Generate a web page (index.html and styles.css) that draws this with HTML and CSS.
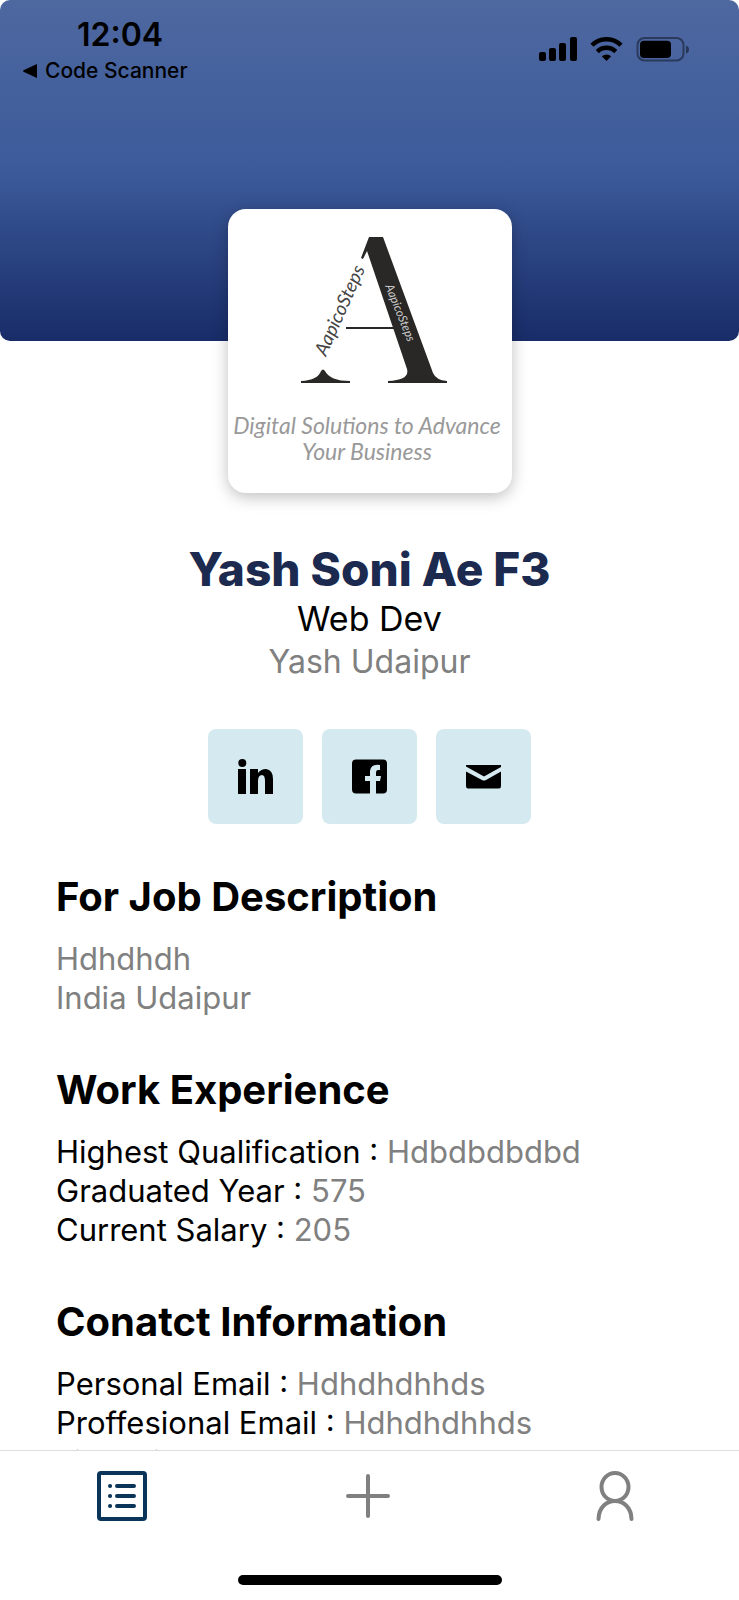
FILE: index.html
```html
<!DOCTYPE html>
<html lang="en">
<head>
<meta charset="utf-8">
<meta name="viewport" content="width=device-width, initial-scale=1">
<title>Yash Soni Ae F3</title>
<link rel="stylesheet" href="styles.css">
</head>
<body>
<div class="app">
  <main class="content">
    <header class="cover">
      <div class="status-left">
        <span class="time">12:04</span>
        <a class="back" href="#"><svg class="back-icon" viewBox="0 0 14 14" aria-hidden="true"><path d="M14 0v14L1 8Q-.8 7 1 6Z"/></svg>Code Scanner</a>
      </div>
      <svg class="status-icons" viewBox="0 0 150 26" aria-hidden="true">
        <rect x="0" y="15" width="7" height="9" rx="2"/>
        <rect x="10" y="11" width="7" height="13" rx="2"/>
        <rect x="20" y="6" width="7" height="18" rx="2"/>
        <rect x="31" y="0" width="7" height="24" rx="2"/>
        <g fill="none" stroke="#000" stroke-width="4.4">
          <path d="M53 8.200a20.500 20.500 0 0 1 29 0"/>
          <path d="M58.300 14.600a13 13 0 0 1 18.400 0"/>
        </g>
        <path d="M67.500 24 62.800 19.200a7 7 0 0 1 9.400 0Z"/>
        <rect x="98.500" y="1" width="46" height="22.500" rx="7" fill="none" stroke="#000" stroke-opacity=".42" stroke-width="2"/>
        <rect x="101" y="3.700" width="31" height="17.200" rx="4"/>
        <path d="M147 8.500q3 1 3 4t-3 4Z" fill-opacity=".45"/>
      </svg>
    </header>

    <section class="profile">
      <svg class="logo" viewBox="0 0 284 284" role="img" aria-label="AapicoSteps">
        <g fill="#292826">
          <path d="M141 28h14l50 136q3 7 14 8v2h-59v-2q22-1 19-12L139 42l-4 8-2-1Z"/>
          <path d="M118 118h49v2h-49Z"/>
          <path d="M73 172q17-1 20-10 2-3 4 0 5 10 25 10v2H73Z"/>
        </g>
        <text class="script" transform="translate(98 148) rotate(-66)" font-size="19" fill="#444">AapicoSteps</text>
        <text class="script" transform="translate(157 77) rotate(68)" font-size="12" fill="#ccc">AapicoSteps</text>
        <text class="script" x="139" y="225" font-size="23" text-anchor="middle" fill="#999">Digital Solutions to Advance</text>
        <text class="script" x="139" y="251" font-size="23" text-anchor="middle" fill="#999">Your Business</text>
      </svg>
      <h1 class="name">Yash Soni Ae F3</h1>
      <p class="role">Web Dev</p>
      <p class="company">Yash Udaipur</p>
      <nav class="social" aria-label="Social links">
        <a class="social-link" href="#" aria-label="LinkedIn"><svg viewBox="0 0 36 36"><circle cx="4.300" cy="4" r="4"/><path d="M0 10h8v25H0ZM12 10h8v4q3-4 8-4 7 1 7 10v15h-8V22q0-6-3-6-4 0-4 6v13h-8Z"/></svg></a>
        <a class="social-link" href="#" aria-label="Facebook"><svg viewBox="0 0 36 36"><path d="M4 .5h27q4 0 4 4v26q0 4-4 4h-7V22h4l1-5h-5v-3q0-3 2-3h2V6q-9-1.500-10 6v5h-5v5h5v12.500H4q-4 0-4-4v-26q0-4 4-4Z"/></svg></a>
        <a class="social-link" href="#" aria-label="Email"><svg viewBox="0 0 36 36"><path d="M0 6h35v2L18 17.500 0 7.500ZM0 12.500 16 21q2 1 4 0l15-8.500V27q0 2.500-2 2.500H2Q0 29.500 0 27Z"/></svg></a>
      </nav>
    </section>

    <section class="block">
      <h2>For Job Description</h2>
      <p class="value">Hdhdhdh</p>
      <p class="value">India Udaipur</p>
    </section>
    <section class="block">
      <h2>Work Experience</h2>
      <p>Highest Qualification : <span class="value">Hdbdbdbdbd</span></p>
      <p>Graduated Year : <span class="value">575</span></p>
      <p>Current Salary : <span class="value">205</span></p>
    </section>
    <section class="block">
      <h2>Conatct Information</h2>
      <p>Personal Email : <span class="value">Hdhdhdhhds</span></p>
      <p>Proffesional Email : <span class="value">Hdhdhdhhds</span></p>
      <p>Linkedin : <span class="value">Hdndndhd</span></p>
    </section>
  </main>

  <footer class="tab-bar">
    <nav class="tabs" aria-label="Main">
      <button class="tab tab-active" aria-label="Cards"><svg viewBox="0 0 60 60"><rect x="6" y="6" width="46" height="46" rx="2"/><path d="M24 19h17M24 29h17M24 39h17"/><path d="M17 19h.1M17 29h.1M17 39h.1"/></svg></button>
      <button class="tab" aria-label="Add"><svg viewBox="0 0 60 60"><path d="M29 9v40M9 29h40"/></svg></button>
      <button class="tab" aria-label="Profile"><svg viewBox="0 0 60 60"><ellipse cx="29" cy="20" rx="13.500" ry="14"/><path d="M12.500 52C13 28 45 28 45.500 52"/></svg></button>
    </nav>
    <div class="home-indicator"></div>
  </footer>
</div>
</body>
</html>
```
FILE: styles.css
```css
* {
  box-sizing: border-box;
}

body {
  margin: 0;
  background: #fff;
  color: #000;
  font-family: Inter, "Liberation Sans", sans-serif;
}

h1,
h2,
p {
  margin: 0;
}

.app {
  display: flex;
  flex-direction: column;
  height: 100vh;
}

.content {
  flex: 1;
  min-height: 0;
  overflow: hidden;
}

.cover {
  display: flex;
  justify-content: space-between;
  align-items: flex-start;
  height: 341px;
  padding: 16px 50px 0 23px;
  border-radius: 10px;
  background: linear-gradient(#4e68a0 0%, #3c5a9a 50%, #182c68 100%);
}

.status-left {
  display: flex;
  flex-direction: column;
}

.time {
  padding-left: 54px;
  font-size: 32px;
  line-height: 38px;
  font-weight: 600;
}

.back {
  display: flex;
  align-items: center;
  gap: 8px;
  color: #000;
  font-size: 21px;
  line-height: 34px;
  font-weight: 500;
  text-decoration: none;
}

.back-icon {
  width: 14px;
  height: 14px;
}

.status-icons {
  width: 150px;
  height: 26px;
  margin-top: 21px;
}

.profile {
  display: flex;
  flex-direction: column;
  align-items: center;
  margin-top: -132px;
}

.logo {
  width: 284px;
  height: 284px;
  border-radius: 18px;
  background: #fff;
  box-shadow: 0 4px 16px rgba(0, 0, 0, 0.25);
}

.script {
  font-family: Lato, sans-serif;
  font-style: italic;
  font-weight: 400;
}

.name {
  margin-top: 48px;
  color: #1b2a4e;
  font-size: 46px;
  line-height: 56px;
  font-weight: 800;
}

.role {
  font-size: 34px;
  line-height: 44px;
}

.company {
  color: #808080;
  font-size: 32px;
  line-height: 42px;
}

.social {
  display: flex;
  gap: 19px;
  margin-top: 46px;
}

.social-link {
  display: flex;
  align-items: center;
  justify-content: center;
  width: 95px;
  height: 95px;
  border-radius: 8px;
  background: #d5eaf0;
}

.social-link svg {
  width: 36px;
  height: 36px;
}

.block {
  margin-top: 47px;
  padding: 0 56px;
  font-size: 31px;
  line-height: 39px;
}

.block h2 {
  margin-bottom: 16px;
  font-size: 40px;
  line-height: 52px;
  font-weight: 700;
}

.value {
  color: #808080;
}

.tab-bar {
  display: flex;
  flex-direction: column;
  align-items: center;
  justify-content: space-between;
  height: 150px;
  padding: 16px 0 15px;
  border-top: 1px solid #ddd;
  background: #fff;
}

.tabs {
  display: flex;
  width: 100%;
}

.tab {
  display: flex;
  flex: 1;
  justify-content: center;
  padding: 0;
  border: 0;
  background: none;
}

.tab svg {
  width: 60px;
  height: 60px;
  fill: none;
  stroke: #808080;
  stroke-width: 4;
  stroke-linecap: round;
}

.tab-active svg {
  stroke: #0b3558;
}

.home-indicator {
  width: 264px;
  height: 10px;
  border-radius: 5px;
  background: #000;
}
```
